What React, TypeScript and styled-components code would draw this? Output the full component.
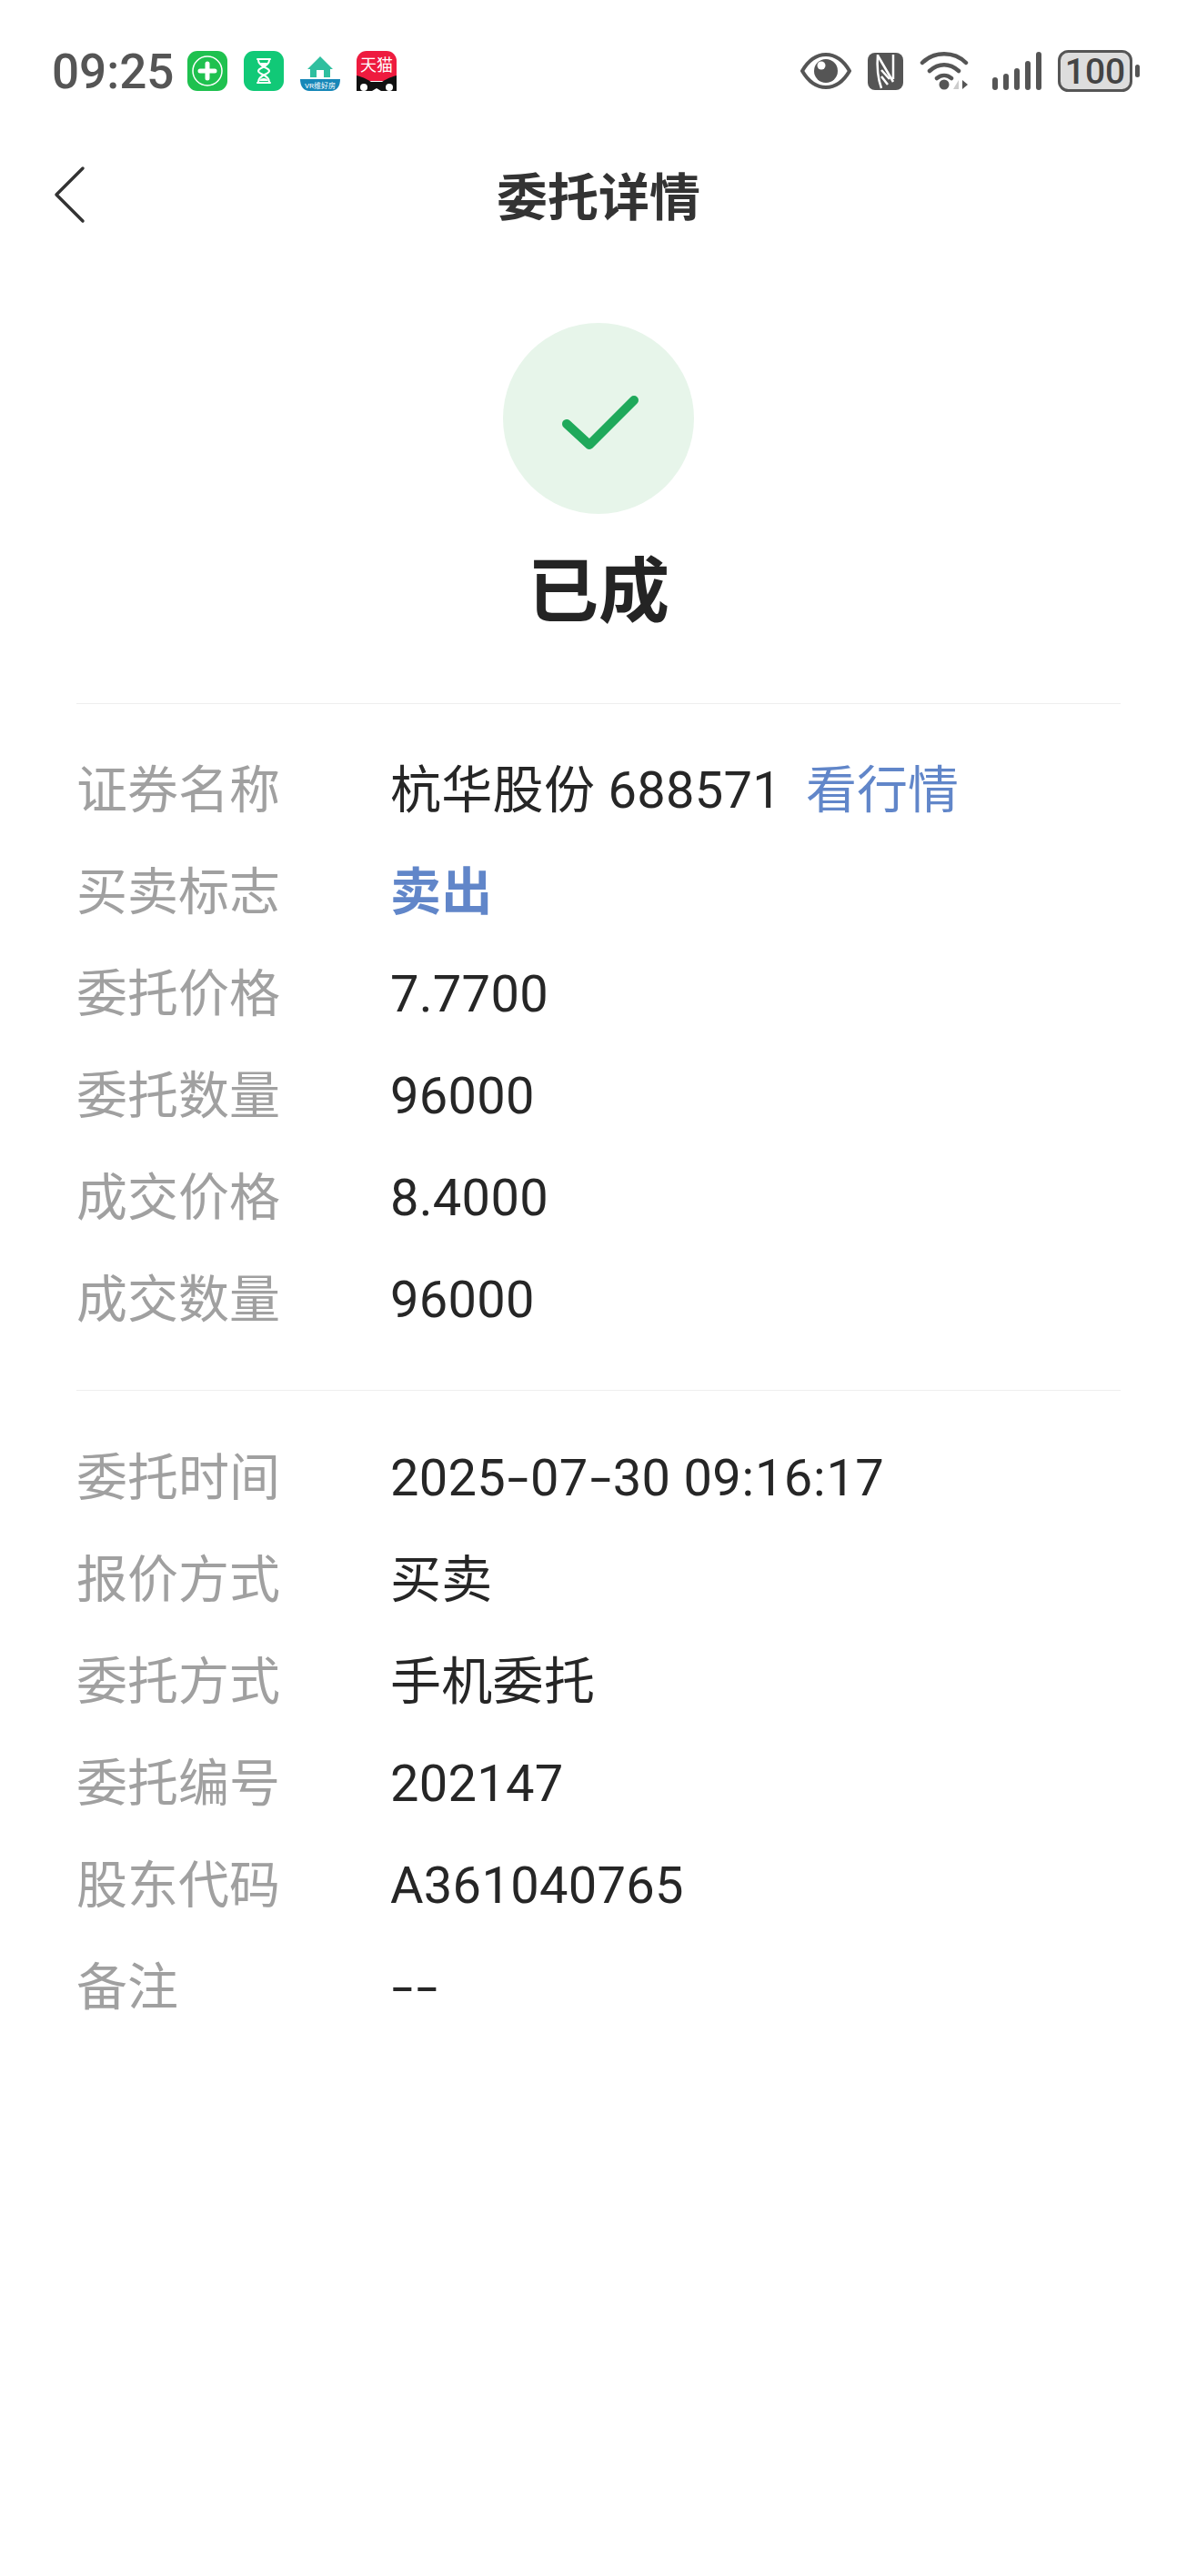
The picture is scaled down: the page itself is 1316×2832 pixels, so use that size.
import { Fragment } from 'react'
import styled, { createGlobalStyle } from 'styled-components'

const GlobalStyle = createGlobalStyle`
  html, body {
    margin: 0;
    padding: 0;
    background: #fff;
  }
  body {
    font-family: Roboto, "Noto Sans CJK SC", sans-serif;
  }
`

const Page = styled.div`
  width: 1316px;
  height: 2832px;
  background: #fff;
  overflow: hidden;
`

const StatusBar = styled.div`
  height: 156px;
  box-sizing: border-box;
  padding: 0 63px 0 57px;
  display: flex;
  align-items: center;
  justify-content: space-between;
`

const StatusLeft = styled.div`
  display: flex;
  align-items: center;
`

const Clock = styled.span`
  font-size: 53px;
  line-height: 60px;
  padding-top: 2px;
  font-weight: 500;
  color: #555;
  width: 149px;
`

const AppIcons = styled.div`
  display: flex;
  align-items: center;
  gap: 18px;
`

const StatusRight = styled.div`
  display: flex;
  align-items: center;
  gap: 18px;
`

const SignalSlot = styled.div`
  display: flex;
  margin-left: 8px;
`

const NavBar = styled.div`
  height: 120px;
  display: flex;
  align-items: center;
  justify-content: center;
  position: relative;
`

const BackButton = styled.div`
  position: absolute;
  left: 58px;
  top: 26px;
  width: 36px;
  height: 64px;
`

const NavTitle = styled.h1`
  margin: 0 0 8px;
  font-size: 56px;
  font-weight: 700;
  color: #333;
`

const Hero = styled.div`
  display: flex;
  flex-direction: column;
  align-items: center;
  padding-top: 79px;
`

const Circle = styled.div`
  width: 210px;
  height: 210px;
  box-sizing: border-box;
  padding: 10px 0 0 4px;
  border-radius: 50%;
  background: #e7f5ea;
  display: flex;
  align-items: center;
  justify-content: center;
`

const StatusText = styled.div`
  margin-top: 32px;
  font-size: 78px;
  line-height: 110px;
  font-weight: 700;
  color: #242424;
`

const Section = styled.div<{ $top: number; $pad: number }>`
  margin: ${(p) => p.$top}px 84px 0;
  padding-top: ${(p) => p.$pad}px;
  border-top: 1px solid #eeeeee;
`

const Row = styled.div`
  height: 112px;
  line-height: 112px;
  display: flex;
  align-items: baseline;
`

const Label = styled.span`
  width: 345px;
  flex: none;
  font-size: 56px;
  color: #a0a0a0;
`

const Value = styled.span<{ $sell?: boolean }>`
  font-size: 56px;
  letter-spacing: 0.3px;
  font-weight: ${(p) => (p.$sell ? 700 : 400)};
  color: ${(p) => (p.$sell ? '#6186c9' : '#262626')};
`

const Separator = styled.span<{ $wide: boolean }>`
  display: inline-block;
  text-align: center;
  width: ${(p) => (p.$wide ? 27 : 15)}px;
  transform: ${(p) => (p.$wide ? 'scaleX(1.5)' : 'none')};
`

const QuoteLink = styled.a`
  margin-left: 27px;
  font-size: 56px;
  color: #6186c9;
  text-decoration: none;
`

const orderRows = [
  ['委托价格', '7.7700'],
  ['委托数量', '96000'],
  ['成交价格', '8.4000'],
  ['成交数量', '96000'],
]

const detailRows = [
  ['委托时间', '2025-07-30 09:16:17'],
  ['报价方式', '买卖'],
  ['委托方式', '手机委托'],
  ['委托编号', '202147'],
  ['股东代码', 'A361040765'],
  ['备注', '--'],
]

// hyphens and colons are wider in the original font
const withSeparators = (text: string) =>
  text.split(/([-:])/).map((part, i) =>
    part === '-' || part === ':' ? (
      <Separator key={i} $wide={part === '-'}>
        {part}
      </Separator>
    ) : (
      <Fragment key={i}>{part}</Fragment>
    ),
  )

const PlusAppIcon = () => (
  <svg width="44" height="44" viewBox="0 0 44 44">
    <rect width="44" height="44" rx="11" fill="#1fc14f" />
    <circle cx="22" cy="22" r="16" fill="none" stroke="#fff" strokeWidth="1.5" />
    <path d="M22 14v16M14 22h16" stroke="#fff" strokeWidth="5" strokeLinecap="round" />
  </svg>
)

const HourglassIcon = () => (
  <svg width="44" height="44" viewBox="0 0 44 44">
    <rect width="44" height="44" rx="11" fill="#11c977" />
    <path d="M15 9h14M15 35h14" stroke="#fff" strokeWidth="2" strokeLinecap="round" />
    <path d="M16 10c0 8 12 8 12 12s-12 4-12 12M28 10c0 8-12 8-12 12s12 4 12 12" fill="none" stroke="#fff" strokeWidth="2" />
    <path d="M18 13h8l-4 6zM17 33c1-4 9-4 10 0z" fill="#fff" />
  </svg>
)

const HouseAppIcon = () => (
  <svg width="44" height="44" viewBox="0 0 44 44">
    <path d="M22 6 36 20h-3v9H11v-9H8z" fill="#2fbf9f" />
    <rect x="18" y="21" width="8" height="8" fill="#fff" />
    <path d="M0 31h44c0 8-4 13-10 13H10C4 44 0 39 0 31z" fill="#1687b8" />
    <text x="22" y="41" fontSize="8" fill="#fff" textAnchor="middle">VR维好房</text>
  </svg>
)

const TmallIcon = () => (
  <svg width="44" height="44" viewBox="0 0 44 44">
    <path d="M11 0h22a11 11 0 0 1 11 11v22H0V11A11 11 0 0 1 11 0z" fill="#ee1b3f" />
    <text x="22" y="22" fontSize="18" fill="#fff" textAnchor="middle">天猫</text>
    <path d="M0 44V27c8 2 13 5 16 7h12c3-2 8-5 16-7v17z" fill="#111" />
    <circle cx="8" cy="40" r="4" fill="#fff" />
    <circle cx="36" cy="40" r="4" fill="#fff" />
    <path d="M17 44h10l-5-3z" fill="#fff" />
  </svg>
)

const EyeIcon = () => (
  <svg width="56" height="40" viewBox="0 0 56 40">
    <path d="M2 20C9 8 17 2 28 2s19 6 26 18c-7 12-15 18-26 18S9 32 2 20z" fill="none" stroke="#555" strokeWidth="4" />
    <circle cx="28" cy="20" r="13" fill="#555" />
    <circle cx="23" cy="14" r="4.5" fill="#fff" />
  </svg>
)

const NfcIcon = () => (
  <svg width="39" height="41" viewBox="0 0 39 41">
    <rect width="39" height="41" rx="8" fill="#555" />
    <path d="M11 2c-1 12 0 26 4 37M11 3l17 29M28 2v27" fill="none" stroke="#fff" strokeWidth="2.5" />
    <path d="M15 19l9 10M15 26l7 9" stroke="#fff" strokeWidth="2.5" />
  </svg>
)

const WifiIcon = () => (
  <svg width="54" height="42" viewBox="0 0 54 42">
    <path d="M3 12C16-1 38-1 51 12M11 21c10-9 22-9 32 0M19 29c5-4 11-4 16 0" fill="none" stroke="#555" strokeWidth="4.5" strokeLinecap="round" />
    <circle cx="27" cy="36" r="5.5" fill="#555" />
    <path d="M43 31v10h-6z" fill="#ccc" />
    <path d="M47 31v10l6-5z" fill="#555" />
  </svg>
)

const SignalIcon = () => (
  <svg width="54" height="42" viewBox="0 0 54 42">
    {[
      [3, 31],
      [15, 27],
      [27, 21],
      [39, 13],
      [51, 3],
    ].map(([x, y]) => (
      <line key={x} x1={x} y1={y} x2={x} y2={39} stroke="#555" strokeWidth="6" strokeLinecap="round" />
    ))}
  </svg>
)

const BatteryIcon = () => (
  <svg width="90" height="46" viewBox="0 0 90 46">
    <rect x="1.5" y="1.5" width="79" height="43" rx="10" fill="#ddd" stroke="#555" strokeWidth="3" />
    <text x="41" y="37" fontSize="39" fontWeight="500" fill="#444" textAnchor="middle" fontFamily="Roboto, sans-serif">100</text>
    <rect x="85" y="16" width="5" height="14" rx="2.5" fill="#555" />
  </svg>
)

const App = () => (
  <Page>
    <GlobalStyle />
    <StatusBar>
      <StatusLeft>
        <Clock>09:25</Clock>
        <AppIcons>
          <PlusAppIcon />
          <HourglassIcon />
          <HouseAppIcon />
          <TmallIcon />
        </AppIcons>
      </StatusLeft>
      <StatusRight>
        <EyeIcon />
        <NfcIcon />
        <WifiIcon />
        <SignalSlot>
          <SignalIcon />
        </SignalSlot>
        <BatteryIcon />
      </StatusRight>
    </StatusBar>
    <NavBar>
      <BackButton>
        <svg width="36" height="64" viewBox="0 0 36 64">
          <path d="M33 3 4 32l29 29" fill="none" stroke="#333" strokeWidth="3.5" strokeLinecap="round" strokeLinejoin="round" />
        </svg>
      </BackButton>
      <NavTitle>委托详情</NavTitle>
    </NavBar>
    <Hero>
      <Circle>
        <svg width="84" height="60" viewBox="0 0 84 60">
          <path d="M5 31l25 23L79 5" fill="none" stroke="#1fa95b" strokeWidth="10" strokeLinecap="round" strokeLinejoin="round" />
        </svg>
      </Circle>
      <StatusText>已成</StatusText>
    </Hero>
    <Section $top={66} $pad={39}>
      <Row>
        <Label>证券名称</Label>
        <Value>杭华股份 688571</Value>
        <QuoteLink href="#">看行情</QuoteLink>
      </Row>
      <Row>
        <Label>买卖标志</Label>
        <Value $sell>卖出</Value>
      </Row>
      {orderRows.map(([label, value]) => (
        <Row key={label}>
          <Label>{label}</Label>
          <Value>{value}</Value>
        </Row>
      ))}
    </Section>
    <Section $top={43} $pad={40}>
      {detailRows.map(([label, value]) => (
        <Row key={label}>
          <Label>{label}</Label>
          <Value>{withSeparators(value)}</Value>
        </Row>
      ))}
    </Section>
  </Page>
)

export default App
